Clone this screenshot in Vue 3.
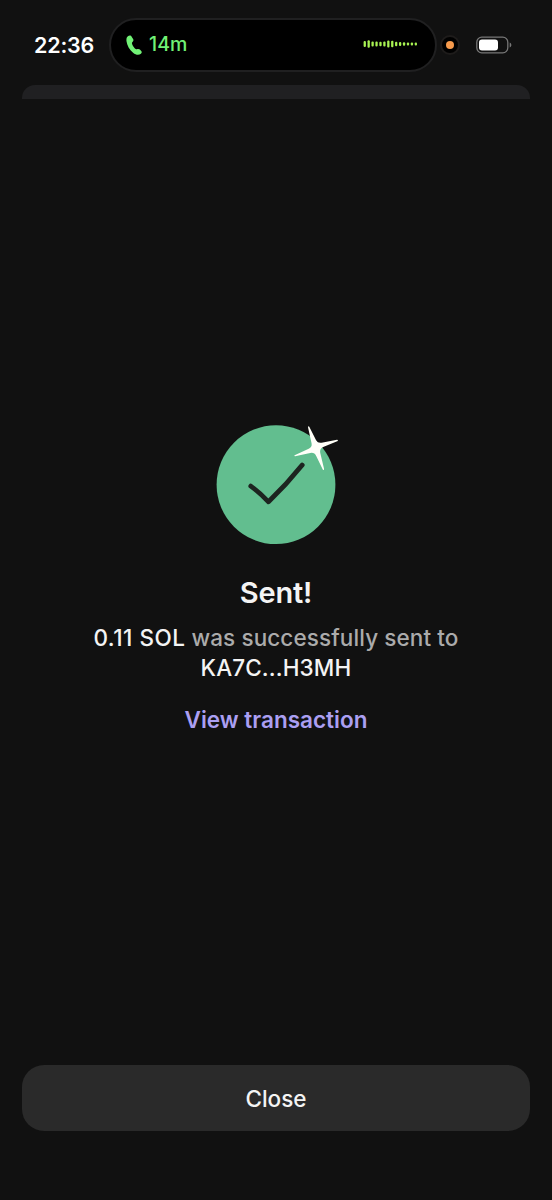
<script setup>
const levels = [6, 7.4, 5, 5, 4.6, 5, 7, 6.4, 4.4, 4, 3.6, 3.2, 3.2, 3]
</script>

<template>
  <main class="screen">
    <header class="status">
      <time class="clock">22:36</time>
      <div class="island">
        <svg class="phone" viewBox="0 0 16 20" width="16" height="20">
          <path d="M2.2 1.1C3.6 .1 5.1 .6 5.8 1.9L7.1 4.1C7.7 5.2 7.5 6.1 6.5 6.9C5.8 7.5 5.8 8.3 6.2 9.3C6.8 10.9 7.8 12.5 8.9 13.5C9.7 14.3 10.5 14.5 11.4 14.1C12.4 13.7 13.2 13.9 13.9 14.6L15.2 16C16 16.9 15.9 18 14.9 18.8C12.9 20.4 9.9 20.1 7.1 17.8C3.4 14.6 1 10.3 .5 6.2C.2 3.7 .7 2 2.2 1.1Z" />
        </svg>
        <span class="duration">14m</span>
        <svg class="wave" viewBox="0 0 56 10" width="56" height="10">
          <rect v-for="(h, n) in levels" :key="n" :x="0.6 + n * 3.93" :y="5 - h / 2" width="2.3" :height="h" rx="1" />
        </svg>
      </div>
      <div class="mic"><i></i></div>
      <svg class="battery" viewBox="0 0 36 18" width="36" height="18">
        <rect x=".8" y="1.2" width="31" height="15.6" rx="5" fill="none" stroke="#777" stroke-width="1.3" />
        <rect x="3" y="3.4" width="19" height="11.2" rx="3" fill="#fff" />
        <path d="M33.7 6.5C35.9 7.4 35.9 10.6 33.7 11.5Z" fill="#777" />
      </svg>
    </header>
    <div class="sheet-edge"></div>
    <section class="result">
      <svg class="badge" viewBox="0 0 160 150" width="160" height="150">
        <circle cx="76" cy="74.7" r="59.4" fill="#62be8f" />
        <path d="M50.8 76.1Q59.7 82.6 68.5 91.8Q86.5 74.5 102.2 55" fill="none" stroke="#1d2420" stroke-width="4.8" stroke-linecap="round" stroke-linejoin="round" />
        <path d="M108.2 16.5Q108.9 16 109.4 17L116.1 30.2Q117.8 33.5 121.6 32.7L137 29.8Q138.2 29.8 137.8 30.9L123.2 37Q119.4 38.7 120.2 42.8L124.1 59Q124 60.3 122.9 59.7L116.2 45.9Q114.4 42 110.2 42.9L95.1 46.3Q93.8 46.2 94.6 45.2L108.7 38.8Q112.3 37.1 111.6 33.5L108 17.3Z" fill="#fffff8" />
      </svg>
      <h1>Sent!</h1>
      <p class="line amount"><strong>0.11 SOL</strong> was successfully sent to</p>
      <p class="line address"><strong>KA7C...H3MH</strong></p>
      <a class="link">View transaction</a>
    </section>
    <button class="close"><span>Close</span></button>
  </main>
</template>

<style>
body { margin: 0; background: #111; }
</style>

<style scoped>
.screen {
  box-sizing: border-box;
  width: 552px;
  height: 1200px;
  display: flex;
  flex-direction: column;
  background: #111;
  color: #f4f4f4;
  font-family: Inter, "Liberation Sans", sans-serif;
  overflow: hidden;
}
.status {
  box-sizing: border-box;
  height: 85px;
  padding: 18px 0 13px 34px;
  display: flex;
  align-items: center;
}
.clock {
  width: 75px;
  font-size: 21.5px;
  font-weight: 600;
  letter-spacing: -0.2px;
  line-height: 26px;
  white-space: nowrap;
  color: #fff;
}
.island {
  box-sizing: border-box;
  width: 328px;
  height: 54px;
  border: 2px solid #202021;
  border-radius: 27px;
  background: #000;
  display: flex;
  align-items: center;
  padding: 0 16px 0 15px;
}
.phone { fill: #71f276; }
.duration {
  margin: -2px 0 0 7px;
  font-size: 19.5px;
  font-weight: 500;
  line-height: 24px;
  letter-spacing: 0.1px;
  color: #71f276;
}
.wave { margin: -2px 0 0 auto; fill: #a8f252; }
.mic {
  box-sizing: border-box;
  width: 20px;
  height: 20px;
  margin: -1px 0 0 3px;
  border: 2px solid #1e1c1b;
  border-radius: 50%;
  background: #000;
  display: flex;
  align-items: center;
  justify-content: center;
}
.mic i { width: 8px; height: 8px; border-radius: 50%; background: #f69a4c; }
.battery { margin: -1px 0 0 16px; }
.sheet-edge {
  height: 14px;
  margin: 0 22px;
  border-radius: 13px 13px 0 0;
  background: #202022;
}
.result {
  flex: 1;
  padding-top: 311px;
  display: flex;
  flex-direction: column;
  align-items: center;
}
.badge { display: block; margin-left: 8px; }
h1 {
  margin: 15px 0 0;
  font-size: 29px;
  line-height: 36px;
  font-weight: 600;
  letter-spacing: -0.2px;
}
.line {
  margin: 0;
  font-size: 22.5px;
  line-height: 30px;
  font-weight: 500;
  letter-spacing: 0.1px;
  color: #ababab;
  white-space: nowrap;
}
.amount { margin-top: 12px; }
.line strong { font-weight: 500; letter-spacing: 0.13px; color: #f4f4f4; }
.amount strong { letter-spacing: 0.5px; }
.link {
  margin-top: 22px;
  font-size: 22.5px;
  line-height: 30px;
  font-weight: 600;
  color: #ab9ff2;
}
.close {
  height: 66px;
  margin: 0 22px 69px;
  border: 0;
  border-radius: 22px;
  background: #2a2a2a;
  color: #f4f4f4;
  font-family: inherit;
  font-size: 22.5px;
  font-weight: 500;
}
</style>
